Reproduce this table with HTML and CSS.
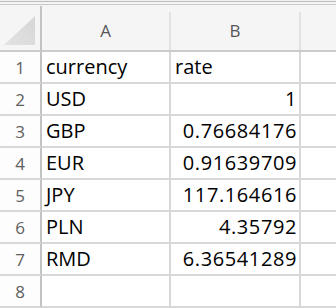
FILE: index.html
```html
<!DOCTYPE html>
<html>
<head>
<meta charset="utf-8">
<link rel="stylesheet" href="styles.css">
</head>
<body>
<div class="topbar"></div>
<div class="sheet">
  <div class="corner"><svg class="tri" width="40" height="44" viewBox="0 0 40 44"><defs><linearGradient id="g" x1="0" y1="1" x2="1" y2="0"><stop offset="0" stop-color="#e2e2e2"/><stop offset="1" stop-color="#d6d6d6"/></linearGradient></defs><polygon points="35,10 35,39 4,39" fill="url(#g)"/></svg></div>
  <div class="colhead">A</div>
  <div class="colhead">B</div>
  <div class="colhead last"></div>

  <div class="rowhead">1</div><div class="cell">currency</div><div class="cell">rate</div><div class="cell last"></div>
  <div class="rowhead">2</div><div class="cell">USD</div><div class="cell num">1</div><div class="cell last"></div>
  <div class="rowhead">3</div><div class="cell">GBP</div><div class="cell num">0.76684176</div><div class="cell last"></div>
  <div class="rowhead">4</div><div class="cell">EUR</div><div class="cell num">0.91639709</div><div class="cell last"></div>
  <div class="rowhead">5</div><div class="cell">JPY</div><div class="cell num">117.164616</div><div class="cell last"></div>
  <div class="rowhead">6</div><div class="cell">PLN</div><div class="cell num">4.35792</div><div class="cell last"></div>
  <div class="rowhead">7</div><div class="cell">RMD</div><div class="cell num">6.36541289</div><div class="cell last"></div>
  <div class="rowhead">8</div><div class="cell"></div><div class="cell"></div><div class="cell last"></div>
</div>
</body>
</html>
```
FILE: styles.css
```css
html, body {
  margin: 0;
  padding: 0;
  background: #ffffff;
}
body {
  font-family: "Open Sans", "Liberation Sans", sans-serif;
  width: 336px;
  height: 308px;
  overflow: hidden;
}
.topbar {
  height: 6px;
  background: linear-gradient(to bottom, #f0f0f0 0 1px, #bdbdbd 1px 2px, #f4f4f4 2px 4px, #c8c8c8 4px 5px, #f5f5f5 5px 6px);
}
.sheet {
  display: grid;
  grid-template-columns: 42px 129px 130px 1fr;
  grid-template-rows: 46px repeat(8, 32px);
}
.sheet > div {
  box-sizing: border-box;
  overflow: hidden;
  white-space: nowrap;
}
.corner {
  background: #f5f5f5;
  border-right: 2px solid #c3c3c3;
  border-bottom: 2px solid #cbcbcb;
}
.tri {
  display: block;
}
.colhead {
  background: linear-gradient(#e2e2e2, #e2e2e2) right 6px / 2px calc(100% - 6px) no-repeat, #f5f5f5;
  border-bottom: 2px solid #cbcbcb;
  color: #555555;
  font-size: 17px;
  text-align: center;
  padding: 6px 2px 0 0;
  line-height: 37px;
}
.colhead.last {
  background: #f5f5f5;
}
.rowhead {
  background: #fdfdfd;
  border-right: 2px solid #c3c3c3;
  border-bottom: 2px solid #d8d8d8;
  color: #606060;
  font-size: 17px;
  text-align: center;
  line-height: 32px;
}
.cell {
  border-right: 2px solid #d8d8d8;
  border-bottom: 2px solid #d8d8d8;
  color: #000000;
  font-size: 20px;
  line-height: 30px;
  padding-left: 4px;
}
.cell.last {
  border-right: none;
}
.num {
  text-align: right;
  padding-left: 0;
  padding-right: 2px;
  letter-spacing: 0.6px;
}
```
